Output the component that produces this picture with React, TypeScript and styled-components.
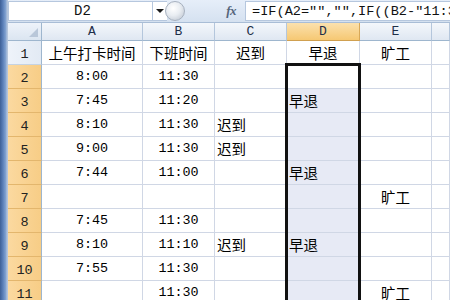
import React from "react";
import styled, { createGlobalStyle } from "styled-components";

const Global = createGlobalStyle`
  html, body { margin: 0; padding: 0; background: #ffffff; }
  body { font-family: "Liberation Mono", "Noto Sans CJK SC", monospace; }
  * { box-sizing: border-box; }
`;

const Window = styled.div`
  width: 450px;
  height: 300px;
  overflow: hidden;
  display: flex;
  background: #ffffff;
`;

const SideStrip = styled.div`
  width: 8px;
  flex: none;
  background: linear-gradient(to right, #3d5f96 0px, #5b80b9 3px, #86a6d3 6px, #b3c4dc 7px);
`;

const Main = styled.div`
  flex: 1;
  min-width: 0;
  display: flex;
  flex-direction: column;
`;

const FormulaBar = styled.div`
  height: 23px;
  flex: none;
  display: flex;
  align-items: stretch;
  background: linear-gradient(to bottom, #e6eef9, #d5e1f0);
  border-bottom: 1px solid #a9bdd6;
  padding: 1px 0 1px 0;
`;

const NameBox = styled.div`
  width: 145px;
  flex: none;
  background: #ffffff;
  border: 1px solid #b6c7de;
  display: flex;
  align-items: center;
  justify-content: center;
  font-family: "Liberation Mono", monospace;
  font-size: 14px;
  color: #111;
  padding-left: 4px;
`;

const DropArrow = styled.div`
  width: 14px;
  flex: none;
  display: flex;
  align-items: center;
  justify-content: center;
  background: #ffffff;
  border-top: 1px solid #b6c7de;
  border-bottom: 1px solid #b6c7de;
  &::after {
    content: "";
    border-left: 4px solid transparent;
    border-right: 4px solid transparent;
    border-top: 4px solid #1a1a1a;
  }
`;

const RoundButton = styled.div`
  width: 20px;
  height: 20px;
  flex: none;
  margin-left: -2px;
  border-radius: 50%;
  align-self: center;
  background: radial-gradient(circle at 40% 35%, #ffffff 0%, #e9edf2 45%, #b7c0cc 100%);
  border: 1px solid #a7b1bf;
`;

const FxArea = styled.div`
  width: 60px;
  flex: none;
  display: flex;
  align-items: center;
  justify-content: flex-end;
  padding-right: 9px;
  font-family: "Liberation Serif", serif;
  font-style: italic;
  font-weight: bold;
  font-size: 13px;
  color: #55657c;
  letter-spacing: -0.5px;
`;

const FormulaInput = styled.div`
  flex: 1;
  min-width: 0;
  background: #ffffff;
  border: 1px solid #b6c7de;
  border-right: none;
  display: flex;
  align-items: center;
  padding-left: 6px;
  white-space: nowrap;
  overflow: hidden;
  font-family: "Liberation Mono", monospace;
  font-size: 13.6px;
  color: #111;
`;

const Grid = styled.div`
  flex: 1;
  display: grid;
  grid-template-columns: 34px 101px 72px 72px 73px 72px 18px;
  grid-template-rows: 18px repeat(11, 24px);
  overflow: hidden;
`;

const Corner = styled.div`
  background: linear-gradient(to bottom, #eef3fa, #dbe5f1);
  border-right: 1px solid #9eb6ce;
  border-bottom: 1px solid #9eb6ce;
  position: relative;
  &::after {
    content: "";
    position: absolute;
    right: 3px;
    bottom: 3px;
    border-left: 9px solid transparent;
    border-bottom: 9px solid #b9c7d9;
  }
`;

const ColHead = styled.div<{ $active?: boolean }>`
  display: flex;
  align-items: center;
  justify-content: center;
  font-family: "Liberation Mono", monospace;
  font-size: 13px;
  color: #1e2f49;
  background: ${(p) =>
    p.$active
      ? "linear-gradient(to bottom, #fbe1ae, #f6c873)"
      : "linear-gradient(to bottom, #f4f7fb, #dfe7f2)"};
  border-right: 1px solid ${(p) => (p.$active ? "#d8a857" : "#b4c6dc")};
  border-bottom: 1px solid ${(p) => (p.$active ? "#d0a050" : "#9eb6ce")};
`;

const RowHead = styled.div<{ $active?: boolean }>`
  display: flex;
  align-items: flex-end;
  justify-content: center;
  padding-bottom: 2px;
  font-family: "Liberation Mono", monospace;
  font-size: 13.5px;
  color: #222;
  background: ${(p) =>
    p.$active
      ? "linear-gradient(to right, #fbd9a0, #f7cd86)"
      : "linear-gradient(to right, #eef3fa, #e2eaf4)"};
  border-right: 1px solid #9eb6ce;
  border-bottom: 1px solid ${(p) => (p.$active ? "#e3b66d" : "#c5d3e3")};
`;

const Cell = styled.div<{
  $align?: "left" | "center";
  $shaded?: boolean;
  $cjk?: boolean;
  $sel?: boolean;
  $selTop?: boolean;
}>`
  position: relative;
  display: flex;
  align-items: flex-end;
  justify-content: ${(p) => (p.$align === "left" ? "flex-start" : "center")};
  padding: 0 2px 1px 2px;
  white-space: nowrap;
  overflow: ${(p) => (p.$sel ? "visible" : "hidden")};
  font-family: ${(p) =>
    p.$cjk ? '"Noto Sans CJK SC", sans-serif' : '"Liberation Mono", monospace'};
  font-size: ${(p) => (p.$cjk ? "14.5px" : "13.4px")};
  line-height: 20px;
  color: #000;
  background: ${(p) => (p.$shaded ? "#e7eaf5" : "#ffffff")};
  border-right: 1px solid #d0d7e5;
  border-bottom: 1px solid #d0d7e5;
  &::before {
    content: ${(p) => (p.$sel ? '""' : "none")};
    position: absolute;
    top: ${(p) => (p.$selTop ? "-2px" : "0")};
    bottom: -1px;
    left: -2px;
    right: -2px;
    border-left: 3px solid #111;
    border-right: 3px solid #111;
    border-top: ${(p) => (p.$selTop ? "3px solid #111" : "none")};
    z-index: 2;
    pointer-events: none;
  }
`;

type Row = { a: string; b: string; c: string; d: string; e: string };

const rows: Row[] = [
  { a: "8:00", b: "11:30", c: "", d: "", e: "" },
  { a: "7:45", b: "11:20", c: "", d: "早退", e: "" },
  { a: "8:10", b: "11:30", c: "迟到", d: "", e: "" },
  { a: "9:00", b: "11:30", c: "迟到", d: "", e: "" },
  { a: "7:44", b: "11:00", c: "", d: "早退", e: "" },
  { a: "", b: "", c: "", d: "", e: "旷工" },
  { a: "7:45", b: "11:30", c: "", d: "", e: "" },
  { a: "8:10", b: "11:10", c: "迟到", d: "早退", e: "" },
  { a: "7:55", b: "11:30", c: "", d: "", e: "" },
  { a: "", b: "11:30", c: "", d: "", e: "旷工" },
];

const headers = ["上午打卡时间", "下班时间", "迟到", "早退", "旷工", ""];

export default function App() {
  return (
    <Window>
      <Global />
      <SideStrip />
      <Main>
        <FormulaBar>
          <NameBox>D2</NameBox>
          <DropArrow />
          <RoundButton />
          <FxArea>fx</FxArea>
          <FormulaInput>=IF(A2="","",IF((B2-"11:30")&lt;0,"早退",""))</FormulaInput>
        </FormulaBar>
        <Grid>
          <Corner />
          {["A", "B", "C", "D", "E", ""].map((l, i) => (
            <ColHead key={i} $active={l === "D"}>
              {l}
            </ColHead>
          ))}
          <RowHead>1</RowHead>
          {headers.map((h, i) => (
            <Cell key={i} $cjk>
              {h}
            </Cell>
          ))}
          {rows.map((r, i) => (
            <React.Fragment key={i}>
              <RowHead $active>{i + 2}</RowHead>
              <Cell>{r.a}</Cell>
              <Cell>{r.b}</Cell>
              <Cell $cjk $align="left">{r.c}</Cell>
              <Cell $cjk $align="left" $shaded={i > 0} $sel $selTop={i === 0}>
                {r.d}
              </Cell>
              <Cell $cjk>{r.e}</Cell>
              <Cell />
            </React.Fragment>
          ))}
        </Grid>
      </Main>
    </Window>
  );
}
